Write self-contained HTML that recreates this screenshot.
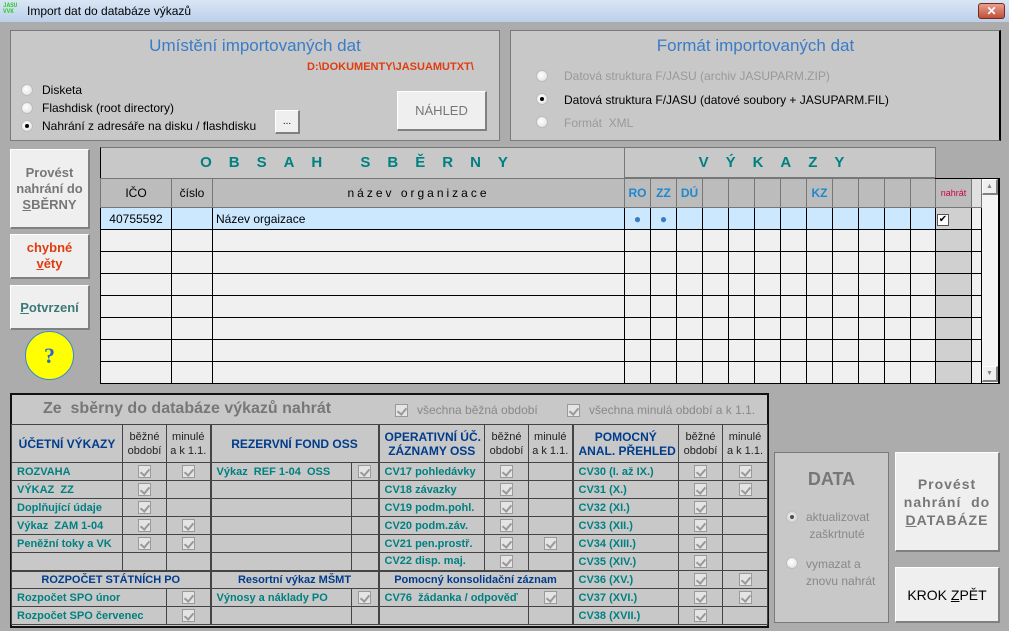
<!DOCTYPE html>
<html><head><meta charset="utf-8">
<style>
*{box-sizing:border-box;margin:0;padding:0}
body{width:1009px;height:631px;background:#acacac;font-family:"Liberation Sans",sans-serif;font-size:12px;position:relative;overflow:hidden}
.a{position:absolute}
.panel{background:#c8c8c8;border:1px solid #7a7a7a}
.btn{background:#efefef;border:1px solid #fff;border-right:2px solid #808080;border-bottom:2px solid #808080;display:flex;align-items:center;justify-content:center;text-align:center;font-weight:bold}
.radio{width:12px;height:12px;border-radius:50%;background:radial-gradient(circle at 40% 40%,#fff,#ddd);border:1px solid #bbb;display:inline-block}
.radio.on::after{content:"";display:block;width:4px;height:4px;background:#000;border-radius:50%;margin:3px}
table{border-collapse:collapse;table-layout:fixed}
.g td{border:1px solid #000;height:22px;background:#f0f0f0;padding:0 3px;font-size:12px}
.g tr.h td{background:#bcbcbc;border-color:#777;text-align:center}
.g tr.sel td{background:#cce8ff}
.b td{border:1px solid #444;height:18px;font-weight:bold;color:#008080;font-size:11px;padding:0 5px;white-space:nowrap;overflow:hidden}
.b td.c{text-align:center;padding:0}
.b td.hd{color:#003c8c;text-align:center;font-size:11px}
.b td.n{color:#222;font-weight:normal;font-size:11px;text-align:center;line-height:14px;padding:0}
.cb{display:inline-block;width:13px;height:13px;border:1px solid #9a9a9a;background:#e4e4e4;vertical-align:middle;position:relative}
.cb::after{content:"";position:absolute;left:3px;top:1px;width:4px;height:7px;border:solid #999;border-width:0 2px 2px 0;transform:rotate(40deg)}
</style></head><body>
<div class="a" style="left:0;top:0;width:1009px;height:22px;background:linear-gradient(#d9e6f5,#bcd0ea)"></div>
<div class="a" style="left:3px;top:3px;font-size:6px;line-height:6px;color:#3c3;font-family:'Liberation Mono',monospace;font-weight:bold">JASU<br>VVK</div>
<div class="a" style="left:27px;top:4px;font-size:12px">Import dat do databáze výkazů</div>
<div class="a" style="left:978px;top:3px;width:27px;height:16px;background:linear-gradient(#e8a090,#c0503a);border:1px solid #7a2a1a;border-radius:3px;color:#fff;font-weight:bold;text-align:center;font-size:12px;line-height:14px">✕</div>

<div class="a panel" style="left:10px;top:30px;width:490px;height:111px"></div>
<div class="a" style="left:10px;top:36px;width:490px;text-align:center;color:#3a7cc8;font-size:17px">Umístění importovaných dat</div>
<div class="a" style="left:307px;top:61px;color:#e03c10;font-weight:bold;font-size:11px">D:\DOKUMENTY\JASUAMUTXT\</div>
<div class="a" style="left:21px;top:84px"><span class="radio"></span></div>
<div class="a" style="left:42px;top:83px">Disketa</div>
<div class="a" style="left:21px;top:102px"><span class="radio"></span></div>
<div class="a" style="left:42px;top:101px">Flashdisk (root directory)</div>
<div class="a" style="left:21px;top:120px"><span class="radio on"></span></div>
<div class="a" style="left:42px;top:119px">Nahrání z adresáře na disku / flashdisku</div>
<div class="a btn" style="left:275px;top:110px;width:25px;height:24px;font-weight:normal;font-size:10px"><span>...</span></div>
<div class="a btn" style="left:397px;top:91px;width:90px;height:40px;font-weight:normal;color:#777;font-size:13px"><span>NÁHLED</span></div>

<div class="a panel" style="left:510px;top:30px;width:491px;height:111px;border-right:2px solid #000"></div>
<div class="a" style="left:510px;top:36px;width:491px;text-align:center;color:#3a7cc8;font-size:17px">Formát importovaných dat</div>
<div class="a" style="left:536px;top:70px"><span class="radio"></span></div>
<div class="a" style="left:564px;top:69px;color:#999">Datová struktura F/JASU (archiv JASUPARM.ZIP)</div>
<div class="a" style="left:536px;top:93px"><span class="radio on"></span></div>
<div class="a" style="left:564px;top:93px">Datová struktura F/JASU (datové soubory + JASUPARM.FIL)</div>
<div class="a" style="left:536px;top:116px"><span class="radio"></span></div>
<div class="a" style="left:564px;top:116px;color:#999">Formát&nbsp; XML</div>

<div class="a btn" style="left:10px;top:149px;width:80px;height:80px;color:#777;font-size:13px;line-height:16px"><span>Provést<br>nahrání do<br><u>S</u>BĚRNY</span></div>
<div class="a btn" style="left:10px;top:234px;width:80px;height:45px;color:#e03c10;font-size:13px;line-height:16px"><span>chybné<br><u>v</u>ěty</span></div>
<div class="a btn" style="left:10px;top:285px;width:80px;height:45px;color:#3c7878;font-size:13px"><span><u>P</u>otvrzení</span></div>
<div class="a" style="left:25px;top:331px;width:49px;height:49px;border-radius:50%;background:#ffff00;border:1px solid #3a8ad0;text-align:center;line-height:47px;font-family:'Liberation Serif',serif;font-weight:bold;font-size:22px;color:#2a6ad0">?</div>

<div class="a" style="left:100px;top:147px;width:899px;height:237px;background:#c8c8c8;border:1px solid #000;border-top:1px solid #777"></div>
<div class="a" style="left:101px;top:148px;width:523px;height:30px;background:#c8c8c8;text-align:center;line-height:30px;color:#008080;font-weight:bold;font-size:15px;letter-spacing:17px">OBSAH SBĚRNY</div>
<div class="a" style="left:936px;top:146px;width:66px;height:32px;background:#acacac"></div>
<div class="a" style="left:624px;top:148px;width:312px;height:30px;background:#c8c8c8;border-left:1px solid #777;border-right:1px solid #777;border-bottom:1px solid #777;text-align:center;line-height:30px;color:#008080;font-weight:bold;font-size:15px;letter-spacing:17px">VÝKAZY</div>
<table class="a g" style="left:100px;top:178px;width:882px">
<colgroup><col style="width:71px"><col style="width:41px"><col style="width:412px"><col style="width:26px"><col style="width:26px"><col style="width:26px"><col style="width:26px"><col style="width:26px"><col style="width:26px"><col style="width:26px"><col style="width:26px"><col style="width:26px"><col style="width:26px"><col style="width:26px"><col style="width:25px"><col style="width:36px"><col style="width:10px"></colgroup>
<tr class="h" style="height:29px"><td style="height:29px">IČO</td><td>číslo</td><td style="letter-spacing:3px">název organizace</td>
<td style="color:#1e88d0;font-weight:bold;padding:0">RO</td><td style="color:#1e88d0;font-weight:bold;padding:0">ZZ</td><td style="color:#1e88d0;font-weight:bold;padding:0">DÚ</td><td></td><td></td><td></td><td></td><td style="color:#1e88d0;font-weight:bold;padding:0">KZ</td><td></td><td></td><td></td><td></td><td style="color:#c8004a;font-size:9px;padding:0">nahrát</td><td style="background:#e0e0e0"></td></tr>
<tr class="sel"><td style="text-align:center">40755592</td><td></td><td>Název orgaizace</td><td style="text-align:center;color:#3a7cc8;padding:0">●</td><td style="text-align:center;color:#3a7cc8;padding:0">●</td><td></td><td></td><td></td><td></td><td></td><td></td><td></td><td></td><td></td><td></td><td style="background:#d0d0d0;padding:0 1px"><span style="display:inline-block;width:12px;height:12px;background:#fff;border:1px solid #555;font-size:10px;line-height:10px;text-align:center">✔</span></td><td style="background:#f0f0f0"></td></tr>
<tr><td></td><td></td><td></td><td></td><td></td><td></td><td></td><td></td><td></td><td></td><td></td><td></td><td></td><td></td><td></td><td style="background:#d0d0d0"></td><td></td></tr>
<tr><td></td><td></td><td></td><td></td><td></td><td></td><td></td><td></td><td></td><td></td><td></td><td></td><td></td><td></td><td></td><td style="background:#d0d0d0"></td><td></td></tr>
<tr><td></td><td></td><td></td><td></td><td></td><td></td><td></td><td></td><td></td><td></td><td></td><td></td><td></td><td></td><td></td><td style="background:#d0d0d0"></td><td></td></tr>
<tr><td></td><td></td><td></td><td></td><td></td><td></td><td></td><td></td><td></td><td></td><td></td><td></td><td></td><td></td><td></td><td style="background:#d0d0d0"></td><td></td></tr>
<tr><td></td><td></td><td></td><td></td><td></td><td></td><td></td><td></td><td></td><td></td><td></td><td></td><td></td><td></td><td></td><td style="background:#d0d0d0"></td><td></td></tr>
<tr><td></td><td></td><td></td><td></td><td></td><td></td><td></td><td></td><td></td><td></td><td></td><td></td><td></td><td></td><td></td><td style="background:#d0d0d0"></td><td></td></tr>
<tr><td></td><td></td><td></td><td></td><td></td><td></td><td></td><td></td><td></td><td></td><td></td><td></td><td></td><td></td><td></td><td style="background:#d0d0d0"></td><td></td></tr>
</table>
<div class="a" style="left:935px;top:178px;width:65px;height:1px;background:#000"></div>
<div class="a" style="left:998px;top:178px;width:2px;height:206px;background:#000"></div>
<div class="a" style="left:982px;top:179px;width:16px;height:204px;background:#f4f4f4"></div>
<div class="a btn" style="left:982px;top:179px;width:16px;height:16px;font-size:7px;color:#888;font-weight:normal"><span>▲</span></div>
<div class="a btn" style="left:982px;top:366px;width:16px;height:16px;font-size:7px;color:#888;font-weight:normal"><span>▼</span></div>

<div class="a" style="left:10px;top:393px;width:759px;height:235px;background:#c8c8c8;border:2px solid #111"></div>
<div class="a" style="left:12px;top:400px;width:350px;text-align:center;color:#777;font-weight:bold;font-size:16px">Ze&nbsp; sběrny do databáze výkazů nahrát</div>
<div class="a" style="left:395px;top:403px"><span class="cb"></span></div>
<div class="a" style="left:417px;top:403px;color:#888">všechna běžná období</div>
<div class="a" style="left:567px;top:403px"><span class="cb"></span></div>
<div class="a" style="left:589px;top:403px;color:#888">všechna minulá období a k 1.1.</div>
<table class="a b" style="left:11px;top:424px;width:756px">
<colgroup><col style="width:111px"><col style="width:44px"><col style="width:44px"><col style="width:141px"><col style="width:27px"><col style="width:106px"><col style="width:44px"><col style="width:44px"><col style="width:106px"><col style="width:44px"><col style="width:45px"></colgroup>
<tr style="height:38px"><td class="hd" style="height:38px;font-size:12px">ÚČETNÍ VÝKAZY</td><td class="n">běžné<br>období</td><td class="n">minulé<br>a k 1.1.</td><td class="hd" colspan="2" style="font-size:12px;border-left:2px solid #444">REZERVNÍ FOND OSS</td><td class="hd" style="font-size:12px;line-height:14px;border-left:2px solid #444">OPERATIVNÍ ÚČ.<br>ZÁZNAMY OSS</td><td class="n">běžné<br>období</td><td class="n">minulé<br>a k 1.1.</td><td class="hd" style="font-size:12px;line-height:14px;border-left:2px solid #444">POMOCNÝ<br>ANAL. PŘEHLED</td><td class="n">běžné<br>období</td><td class="n">minulé<br>a k 1.1.</td></tr>
<tr><td>ROZVAHA</td><td class="c"><span class="cb"></span></td><td class="c"><span class="cb"></span></td><td style="border-left:2px solid #444">Výkaz&nbsp; REF 1-04&nbsp; OSS</td><td class="c"><span class="cb"></span></td><td style="border-left:2px solid #444">CV17 pohledávky</td><td class="c"><span class="cb"></span></td><td></td><td style="border-left:2px solid #444">CV30 (I. až IX.)</td><td class="c"><span class="cb"></span></td><td class="c"><span class="cb"></span></td></tr>
<tr><td>VÝKAZ&nbsp; ZZ</td><td class="c"><span class="cb"></span></td><td></td><td style="border-left:2px solid #444"></td><td></td><td style="border-left:2px solid #444">CV18 závazky</td><td class="c"><span class="cb"></span></td><td></td><td style="border-left:2px solid #444">CV31 (X.)</td><td class="c"><span class="cb"></span></td><td class="c"><span class="cb"></span></td></tr>
<tr><td>Doplňující údaje</td><td class="c"><span class="cb"></span></td><td></td><td style="border-left:2px solid #444"></td><td></td><td style="border-left:2px solid #444">CV19 podm.pohl.</td><td class="c"><span class="cb"></span></td><td></td><td style="border-left:2px solid #444">CV32 (XI.)</td><td class="c"><span class="cb"></span></td><td></td></tr>
<tr><td>Výkaz&nbsp; ZAM 1-04</td><td class="c"><span class="cb"></span></td><td class="c"><span class="cb"></span></td><td style="border-left:2px solid #444"></td><td></td><td style="border-left:2px solid #444">CV20 podm.záv.</td><td class="c"><span class="cb"></span></td><td></td><td style="border-left:2px solid #444">CV33 (XII.)</td><td class="c"><span class="cb"></span></td><td></td></tr>
<tr><td>Peněžní toky a VK</td><td class="c"><span class="cb"></span></td><td class="c"><span class="cb"></span></td><td style="border-left:2px solid #444"></td><td></td><td style="border-left:2px solid #444">CV21 pen.prostř.</td><td class="c"><span class="cb"></span></td><td class="c"><span class="cb"></span></td><td style="border-left:2px solid #444">CV34 (XIII.)</td><td class="c"><span class="cb"></span></td><td></td></tr>
<tr><td></td><td></td><td></td><td style="border-left:2px solid #444"></td><td></td><td style="border-left:2px solid #444">CV22 disp. maj.</td><td class="c"><span class="cb"></span></td><td></td><td style="border-left:2px solid #444">CV35 (XIV.)</td><td class="c"><span class="cb"></span></td><td></td></tr>
<tr><td class="hd" colspan="3" style="border-top:2px solid #444">ROZPOČET STÁTNÍCH PO</td><td class="hd" colspan="2" style="border-left:2px solid #444;border-top:2px solid #444">Resortní výkaz MŠMT</td><td class="hd" colspan="3" style="border-left:2px solid #444;border-top:2px solid #444">Pomocný konsolidační záznam</td><td style="border-left:2px solid #444">CV36 (XV.)</td><td class="c"><span class="cb"></span></td><td class="c"><span class="cb"></span></td></tr>
<tr><td colspan="2">Rozpočet SPO únor</td><td class="c"><span class="cb"></span></td><td style="border-left:2px solid #444">Výnosy a náklady PO</td><td class="c"><span class="cb"></span></td><td colspan="2" style="border-left:2px solid #444">CV76&nbsp; žádanka / odpověď</td><td class="c"><span class="cb"></span></td><td style="border-left:2px solid #444">CV37 (XVI.)</td><td class="c"><span class="cb"></span></td><td class="c"><span class="cb"></span></td></tr>
<tr><td colspan="2">Rozpočet SPO červenec</td><td class="c"><span class="cb"></span></td><td style="border-left:2px solid #444"></td><td></td><td colspan="2" style="border-left:2px solid #444"></td><td></td><td style="border-left:2px solid #444">CV38 (XVII.)</td><td class="c"><span class="cb"></span></td><td></td></tr>
</table>

<div class="a panel" style="left:774px;top:452px;width:115px;height:171px"></div>
<div class="a" style="left:774px;top:469px;width:115px;text-align:center;color:#777;font-weight:bold;font-size:18px">DATA</div>
<div class="a" style="left:786px;top:511px"><span class="radio on" style="opacity:.6"></span></div>
<div class="a" style="left:806px;top:509px;color:#888;line-height:17px">aktualizovat<br>&nbsp;zaškrtnuté</div>
<div class="a" style="left:786px;top:557px"><span class="radio"></span></div>
<div class="a" style="left:806px;top:556px;color:#888;line-height:17px">vymazat a<br>znovu nahrát</div>
<div class="a btn" style="left:895px;top:452px;width:105px;height:100px;color:#777;font-size:14px;line-height:18px;letter-spacing:1px"><span>Provést<br>nahrání&nbsp; do<br><u>D</u>ATABÁZE</span></div>
<div class="a btn" style="left:895px;top:567px;width:105px;height:56px;color:#000;font-size:14px;font-weight:normal"><span>KROK <u>Z</u>PĚT</span></div>
</body></html>
